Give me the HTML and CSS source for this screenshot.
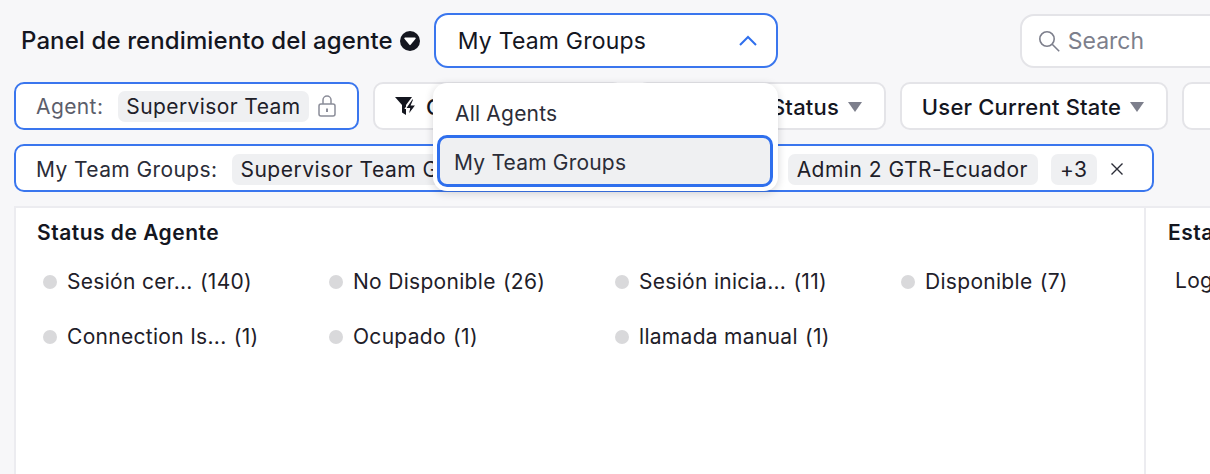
FILE: index.html
```html
<!DOCTYPE html>
<html lang="es">
<head>
<meta charset="utf-8">
<title>Panel de rendimiento del agente</title>
<link rel="stylesheet" href="styles.css">
</head>
<body>
<div class="page">
  <header class="top">
    <h1 class="title">Panel de rendimiento del agente</h1>
    <svg class="title-icon" width="20" height="20" viewBox="0 0 20 20"><circle cx="10" cy="10" r="10" fill="#14161f"/><path d="M5 6.500h10a.8.8 0 0 1 .6 1.300l-5 6a.8.8 0 0 1-1.200 0l-5-6A.8.8 0 0 1 5 6.500z" fill="#fff"/></svg>
    <div class="select">
      <span>My Team Groups</span>
      <svg width="20" height="12" viewBox="0 0 20 12"><path d="M2 10l8-8 8 8" fill="none" stroke="#2f6fed" stroke-width="2"/></svg>
    </div>
    <div class="search">
      <svg width="24" height="24" viewBox="0 0 24 24"><circle cx="10" cy="10" r="7.200" fill="none" stroke="#7d7f8c" stroke-width="1.600"/><path d="M15.200 15.200l7 7" stroke="#7d7f8c" stroke-width="1.600" fill="none"/></svg>
      <span>Search</span>
    </div>
  </header>

  <div class="filters">
    <div class="filter active agent">
      <span class="label">Agent:</span>
      <span class="tag">Supervisor Team</span>
      <svg class="lock" width="18" height="22" viewBox="0 0 18 22"><rect x="1" y="9" width="16" height="12" rx="2" fill="#fff" stroke="#8b8d99" stroke-width="1.500"/><path d="M5 9V5a4 4 0 0 1 8 0v4" fill="none" stroke="#8b8d99" stroke-width="1.500"/><path d="M9 13.500v3.500" stroke="#8b8d99" stroke-width="2"/></svg>
    </div>
    <div class="filter plain quick">
      <svg width="22" height="20" viewBox="0 0 22 20"><path d="M0 0h17l-6 8v10l-4-2.500V8z" fill="#14161f"/><path d="M17 2L10.500 11.500h4l-1.500 7 8-10.500h-4.500l2.500-6z" fill="#14161f" stroke="#fff" stroke-width="1.200"/></svg>
      <span>Quick</span>
    </div>
    <div class="filter plain status"><span>Agent Status</span><i class="caret"></i></div>
    <div class="filter plain state"><span>User Current State</span><i class="caret"></i></div>
    <div class="filter plain last"><span>User Group</span><i class="caret"></i></div>
  </div>

  <div class="filter active groups">
    <span class="label dark">My Team Groups:</span>
    <span class="tag">Supervisor Team Group 1</span>
    <span class="tag tag-long">Admin 1 GTR-Ecuador</span>
    <span class="tag tag-admin">Admin 2 GTR-Ecuador</span>
    <span class="tag tag-count">+3</span>
    <svg class="close" width="14" height="14" viewBox="0 0 14 14"><path d="M1.500 1.500l11 11M12.500 1.500l-11 11" stroke="#2b2d38" stroke-width="1.400" fill="none"/></svg>
  </div>

  <main class="panels">
    <section class="panel agent-status">
      <h2>Status de Agente</h2>
      <ul class="legend">
        <li><i></i>Sesión cer... <span>(140)</span></li>
        <li><i></i>No Disponible <span>(26)</span></li>
        <li><i></i>Sesión inicia... <span>(11)</span></li>
        <li><i></i>Disponible <span>(7)</span></li>
        <li><i></i>Connection Is... <span>(1)</span></li>
        <li><i></i>Ocupado <span>(1)</span></li>
        <li><i></i>llamada manual <span>(1)</span></li>
      </ul>
    </section>
    <section class="panel side">
      <h2>Estado</h2>
      <p>Logged</p>
    </section>
  </main>

  <div class="menu">
    <div class="menu-item">All Agents</div>
    <div class="menu-item selected">My Team Groups</div>
  </div>
</div>
</body>
</html>
```
FILE: styles.css
```css
* { box-sizing: border-box; }
html, body { margin: 0; height: 100%; overflow: hidden; }
body { background: #f7f7f9; font-family: Inter, "Liberation Sans", sans-serif; color: #14161f; }
.page { position: relative; width: 1210px; height: 474px; overflow: hidden; padding: 13px 0 0 14px; }
.top { display: flex; align-items: center; height: 55px; width: 1300px; }
.title { margin: 0 0 0 7px; font-size: 24px; font-weight: 500; letter-spacing: .1px; white-space: nowrap; }
.title-icon { margin-left: 7px; flex: none; }
.select { margin-left: 14px; width: 344px; height: 55px; flex: none; background: #fff; border: 2px solid #3a76ee; border-radius: 14px; display: flex; align-items: center; justify-content: space-between; padding: 0 18px 0 22px; font-size: 23px; letter-spacing: .2px; }
.search { margin-left: 242px; width: 260px; height: 54px; flex: none; background: #fff; border: 2px solid #e4e4e8; border-radius: 14px; display: flex; align-items: center; gap: 7px; padding-left: 15px; font-size: 23px; color: #7d7f8c; }
.filters { display: flex; gap: 14px; margin-top: 14px; width: 1400px; }
.filter { height: 48px; background: #fff; border-radius: 10px; display: flex; align-items: center; font-size: 21px; letter-spacing: .4px; white-space: nowrap; flex: none; padding-top: 1px; }
.active { border: 2px solid #3a76ee; }
.plain { border: 2px solid #e4e4e8; justify-content: center; gap: 9px; font-weight: 500; font-size: 22px; letter-spacing: .2px; }
.agent { width: 345px; padding-left: 20px; }
.quick { width: 250px; justify-content: flex-start; padding-left: 20px; }
.status { width: 249px; justify-content: flex-end; padding-right: 22px; }
.state { width: 268px; padding-right: 2px; }
.last { width: 200px; }
.label { color: #5c5e6b; margin-right: 15px; }
.label.dark { color: #2b2d38; }
.tag { background: #eff0f2; border-radius: 7px; height: 31px; line-height: 31px; padding: 0 8px; color: #1e2029; margin-right: 13px; white-space: nowrap; }
.tag-long { padding-right: 17px; }
.tag-admin { padding: 0 10px 0 9px; }
.tag-count { padding: 0 9px; }
.lock { margin-left: -4px; margin-top: -2px; }
.caret { width: 0; height: 0; border-left: 7px solid transparent; border-right: 7px solid transparent; border-top: 10px solid #7d7f8c; }
.groups { margin-top: 14px; width: 1140px; padding-left: 20px; padding-top: 2px; letter-spacing: .5px; }
.groups .label { letter-spacing: .4px; }
.panels { display: flex; margin-top: 14px; width: 1400px; height: 268px; background: #fff; border: 2px solid #ececf0; border-bottom: 0; }
.panel h2 { margin: 0; font-size: 21px; font-weight: 600; letter-spacing: .5px; }
.agent-status { width: 1130px; padding: 12px 21px; border-right: 2px solid #ececf0; flex: none; }
.legend { list-style: none; margin: 23px 0 0 6px; padding: 0; display: grid; grid-template-columns: repeat(4, 286px); row-gap: 28px; font-size: 21px; letter-spacing: .3px; }
.legend li { display: flex; align-items: center; height: 27px; white-space: pre; color: #1e2029; }
.legend li span { margin-left: 1px; }
.legend i { width: 14px; height: 14px; border-radius: 50%; background: #d9d9db; margin-right: 10px; flex: none; }
.side { padding: 12px 22px; }
.side p { margin: 23px 0 0 7px; font-size: 21px; letter-spacing: .3px; color: #1e2029; }
.menu { position: absolute; left: 433px; top: 83px; width: 345px; height: 108px; background: #fff; border-radius: 14px; box-shadow: 0 2px 8px rgba(20,22,31,.18); padding: 7px 5px 4px 4px; font-size: 21px; letter-spacing: .2px; }
.menu-item { height: 47px; padding-left: 18px; display: flex; align-items: center; color: #2b2d38; }
.menu-item.selected { height: 52px; margin-top: -2px; padding-top: 2px; background: #eff0f2; border: 3px solid #2f6fed; border-radius: 10px; padding-left: 14px; }
```
